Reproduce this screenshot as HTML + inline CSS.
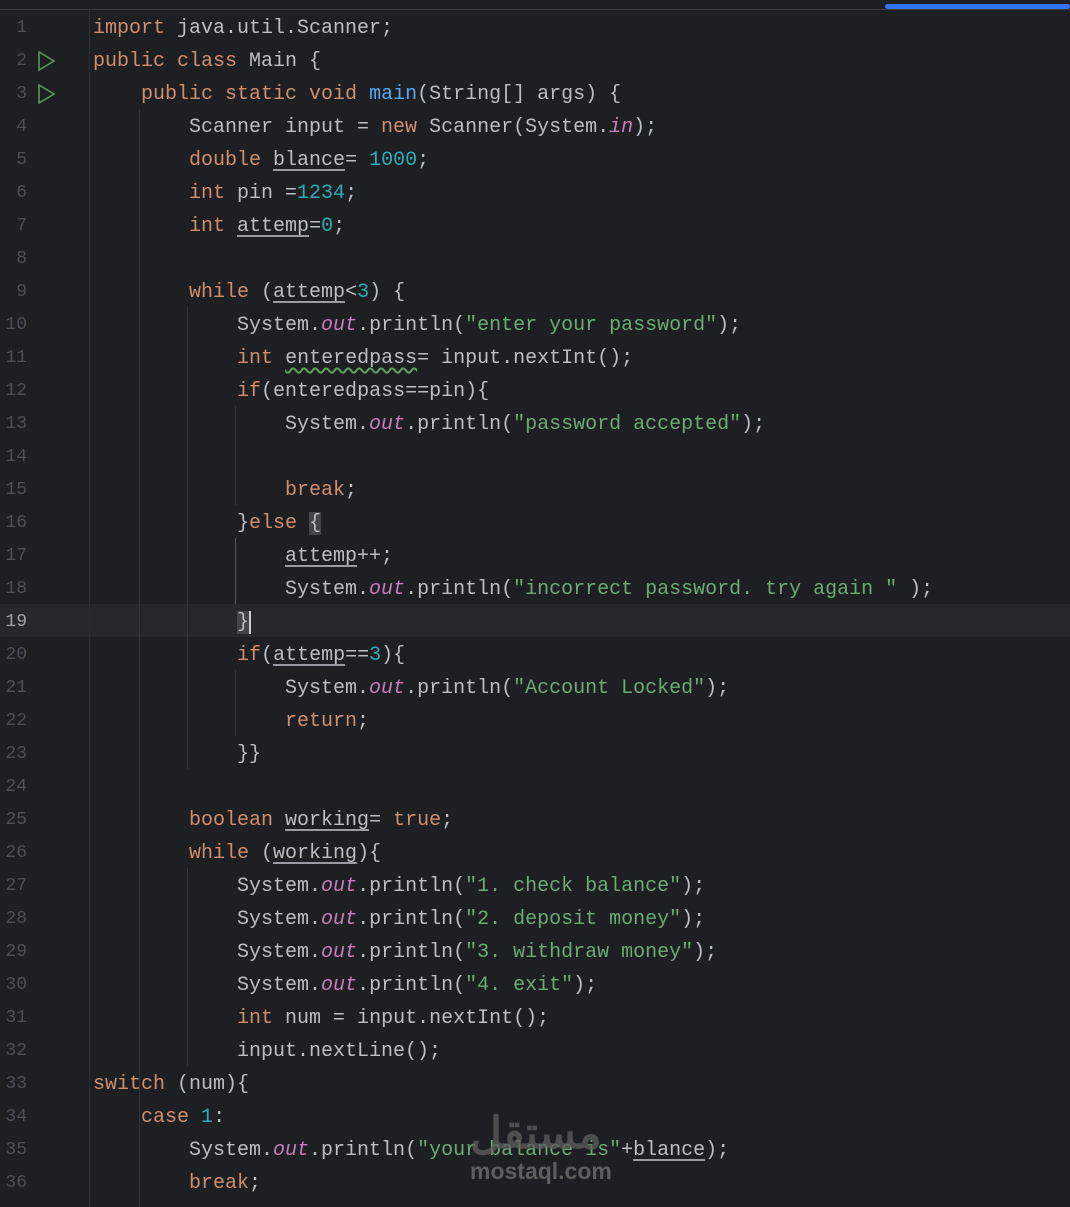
<!DOCTYPE html>
<html><head><meta charset="utf-8"><style>
body{margin:0;width:1070px;height:1207px;background:#1e1f22;overflow:hidden;position:relative;font-family:"Liberation Mono",monospace;font-size:20px}
.top{position:absolute;left:0;top:0;width:1070px;height:9px;background:#1e1f22;border-bottom:1px solid #393b40}
.blue{position:absolute;left:885px;top:4px;width:185px;height:5px;background:#3574f0;border-radius:3px}
.sep{position:absolute;left:89px;top:10px;width:1px;height:1197px;background:#2b2d30}
.cur{position:absolute;left:0;top:604px;width:1070px;height:33px;background:#26282e}
.g{position:absolute;width:1px;background:#313438}
.ln{position:absolute;left:0;width:27px;text-align:right;color:#4b5059;line-height:33px;height:33px;font-size:18px;padding-top:2px}
.c{position:absolute;left:93px;line-height:33px;height:33px;color:#bcbec4;white-space:pre;padding-top:2px}
.k{color:#cf8e6d}.n{color:#2aacb8}.s{color:#6aab73}.o{color:#c77dbb;font-style:italic}.m{color:#56a8f5}
.u{text-decoration:underline;text-decoration-color:#9a9ca3;text-underline-offset:4px}
.w{text-decoration:underline wavy #5fa05f;text-underline-offset:4px}
.run{position:absolute;left:37px}
.wm{position:absolute;left:470px;top:1158px;color:#6a6a6a;font-family:"Liberation Sans",sans-serif;font-weight:bold;font-size:23px;opacity:.85}
.wa{position:absolute;left:470px;top:1108px;color:#5e5e5e;font-family:"Liberation Sans","Noto Sans CJK SC",sans-serif;font-weight:bold;font-size:44px;opacity:.75}
</style></head><body>
<div class="top"></div><div class="blue"></div>
<div class="cur"></div>
<div class="sep"></div>
<div class="g" style="left:139px;top:109px;height:1098px"></div>
<div class="g" style="left:187px;top:307px;height:462px"></div>
<div class="g" style="left:187px;top:868px;height:198px"></div>
<div class="g" style="left:235px;top:406px;height:99px"></div>
<div class="g" style="left:235px;top:538px;height:66px;background:#55585e"></div>
<div class="g" style="left:235px;top:670px;height:66px"></div>
<svg class="run" style="top:50px" width="20" height="22"><path d="M2 2 L17 11 L2 20 Z" fill="none" stroke="#57965c" stroke-width="1.6"/></svg>
<svg class="run" style="top:83px" width="20" height="22"><path d="M2 2 L17 11 L2 20 Z" fill="none" stroke="#57965c" stroke-width="1.6"/></svg>
<div id="L"></div>
<div class="wa">مستقل</div>
<div class="wm">mostaql.com</div>
<script>
var lines=[
'<span class="k">import</span> java.util.Scanner;',
'<span class="k">public class</span> Main {',
'    <span class="k">public static void</span> <span class="m">main</span>(String[] args) {',
'        Scanner input = <span class="k">new</span> Scanner(System.<span class="o">in</span>);',
'        <span class="k">double</span> <span class="u">blance</span>= <span class="n">1000</span>;',
'        <span class="k">int</span> pin =<span class="n">1234</span>;',
'        <span class="k">int</span> <span class="u">attemp</span>=<span class="n">0</span>;',
'',
'        <span class="k">while</span> (<span class="u">attemp</span>&lt;<span class="n">3</span>) {',
'            System.<span class="o">out</span>.println(<span class="s">"enter your password"</span>);',
'            <span class="k">int</span> <span class="w">enteredpass</span>= input.nextInt();',
'            <span class="k">if</span>(enteredpass==pin){',
'                System.<span class="o">out</span>.println(<span class="s">"password accepted"</span>);',
'',
'                <span class="k">break</span>;',
'            }<span class="k">else</span> <span style="background:#43454a">{</span>',
'                <span class="u">attemp</span>++;',
'                System.<span class="o">out</span>.println(<span class="s">"incorrect password. try again "</span> );',
'            <span style="background:#43454a;border-right:2px solid #ced0d6">}</span>',
'            <span class="k">if</span>(<span class="u">attemp</span>==<span class="n">3</span>){',
'                System.<span class="o">out</span>.println(<span class="s">"Account Locked"</span>);',
'                <span class="k">return</span>;',
'            }}',
'',
'        <span class="k">boolean</span> <span class="u">working</span>= <span class="k">true</span>;',
'        <span class="k">while</span> (<span class="u">working</span>){',
'            System.<span class="o">out</span>.println(<span class="s">"1. check balance"</span>);',
'            System.<span class="o">out</span>.println(<span class="s">"2. deposit money"</span>);',
'            System.<span class="o">out</span>.println(<span class="s">"3. withdraw money"</span>);',
'            System.<span class="o">out</span>.println(<span class="s">"4. exit"</span>);',
'            <span class="k">int</span> num = input.nextInt();',
'            input.nextLine();',
'<span class="k">switch</span> (num){',
'    <span class="k">case</span> <span class="n">1</span>:',
'        System.<span class="o">out</span>.println(<span class="s">"your balance is"</span>+<span class="u">blance</span>);',
'        <span class="k">break</span>;'];
var h='';
for(var i=0;i<lines.length;i++){var t=10+i*33;
h+='<div class="ln" style="top:'+t+'px'+(i==18?';color:#a1a3ab':'')+'">'+(i+1)+'</div><div class="c" style="top:'+t+'px">'+lines[i]+'</div>';}
document.getElementById('L').innerHTML=h;
</script>
</body></html>
